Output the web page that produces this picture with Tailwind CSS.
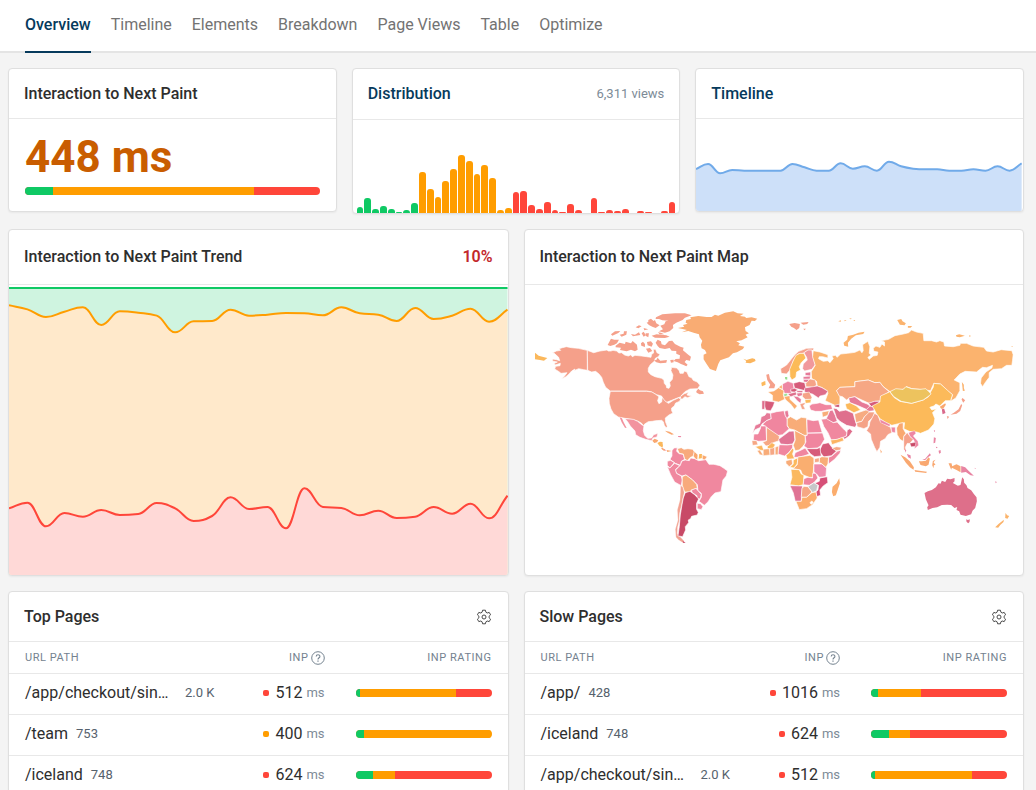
<!DOCTYPE html>
<html lang="en">
<head>
  <meta charset="UTF-8" />
  <meta name="viewport" content="width=device-width, initial-scale=1.0"/>
  <title>Interaction to Next Paint - Overview</title>

  <!-- Tailwind CSS v4 CDN -->
  <script src="https://cdn.jsdelivr.net/npm/@tailwindcss/browser@4"></script>
</head>
<body class="bg-[#f4f4f4] font-[Roboto,sans-serif] text-[#2e2e2e] min-h-screen">

  <!-- Tabs -->
  <header class="bg-white border-b-2 border-[#e4e4e4] pl-[25px]">
    <nav class="flex gap-5 text-base text-[#737373]">
      <a href="#overview" class="-mb-0.5 border-b-2 border-[#063a5c] pt-[13px] pb-3.5 font-medium text-[#063a5c]">Overview</a>
      <a href="#timeline" class="pt-[13px]">Timeline</a>
      <a href="#elements" class="pt-[13px]">Elements</a>
      <a href="#breakdown" class="pt-[13px]">Breakdown</a>
      <a href="#page-views" class="pt-[13px]">Page Views</a>
      <a href="#table" class="pt-[13px]">Table</a>
      <a href="#optimize" class="pt-[13px]">Optimize</a>
    </nav>
  </header>

  <main class="flex flex-col gap-[15px] pt-[15px] pl-2 pr-3">

    <!-- Summary cards -->
    <div class="grid grid-cols-3 gap-[15px] items-start">
      <section class="bg-white border border-[#dfdfdf] rounded shadow-xs overflow-hidden">
        <h2 class="h-[50px] flex items-center px-[15px] border-b border-[#e8e8e8] font-medium">Interaction to Next Paint</h2>
        <div class="p-4">
          <p class="text-[44px] leading-[44px] font-bold text-[#c95d00]">448 ms</p>
          <div class="mt-2 flex h-2 rounded-full overflow-hidden bg-[#ff463a]">
            <div class="bg-[#0fc964]" style="width:9.5%"></div>
            <div class="bg-[#ff9d00]" style="width:68.2%"></div>
          </div>
        </div>
      </section>

      <section class="bg-white border border-[#dfdfdf] rounded shadow-xs overflow-hidden">
        <div class="h-[51px] flex items-center justify-between px-[15px] border-b border-[#e8e8e8]">
          <h2 class="font-medium"><a href="#distribution" class="text-[#063a5c]">Distribution</a></h2>
          <span class="text-[13px] text-[#7d8b97]">6,311 views</span>
        </div>
        <div id="distribution" class="h-[93px] flex items-end pl-1 pr-[3px]"></div>
      </section>

      <section class="bg-white border border-[#dfdfdf] rounded shadow-xs overflow-hidden">
        <h2 class="h-[50px] flex items-center px-[15px] border-b border-[#e8e8e8] font-medium"><a href="#timeline" class="text-[#063a5c]">Timeline</a></h2>
        <svg id="timeline" class="block w-full h-[92px] pr-px" viewBox="0 0 978 276" preserveAspectRatio="none"></svg>
      </section>
    </div>

    <!-- Trend and map -->
    <div class="grid grid-cols-2 gap-[15px]">
      <section class="bg-white border border-[#dfdfdf] rounded shadow-xs overflow-hidden">
        <div class="h-[55px] flex items-center justify-between px-[15px] border-b border-[#e8e8e8]">
          <h2 class="font-medium">Interaction to Next Paint Trend</h2>
          <span class="font-semibold text-[#c3272b]">10%</span>
        </div>
        <svg id="trend" class="block w-full h-[290px]" viewBox="0 0 1497 870" preserveAspectRatio="none"></svg>
      </section>

      <section class="bg-white border border-[#dfdfdf] rounded shadow-xs overflow-hidden">
        <h2 class="h-[55px] flex items-center px-[15px] border-b border-[#e8e8e8] font-medium">Interaction to Next Paint Map</h2>
        <svg class="block w-full h-[290px]" viewBox="0 -45 1496 870" role="img" aria-label="World map" stroke="#fff" stroke-width="2" stroke-linejoin="round">
          <!-- North America -->
          <g fill="#f5a08a">
            <path d="M82 159 94 153 107 151 102 146 112 143 124 140 140 143 160 145 187 151 187 211 176 209 161 206 147 212 150 207 140 213 132 222 123 230 110 237 118 229 126 218 108 220 102 215 89 207 92 199 105 197 106 190 90 195 88 190 97 186 82 183 83 177 95 179 104 182 101 172 88 160Z"/>
            <path d="M187 151 206 158 225 153 246 150 250 153 258 153 264 151 275 153 282 159 290 158 299 165 310 168 318 164 322 170 330 166 350 168 365 170 378 172 380 163 386 159 385 148 392 148 396 158 405 163 400 170 391 175 388 184 376 194 370 205 370 216 378 224 390 230 410 235 417 240 418 250 424 257 425 263 432 265 436 258 434 247 442 238 444 225 438 212 440 202 455 204 463 212 465 220 475 220 478 213 486 216 492 230 500 233 505 241 517 246 525 256 518 266 495 267 480 275 468 288 478 281 491 277 486 285 500 288 488 293 480 290 472 297 465 296 468 290 455 295 440 301 425 307 415 299 410 288 395 284 378 275 365 273 256 273 242 262 235 247 230 232 222 222 212 214 200 216 188 211Z"/>
            <path d="M256 274 365 274 381 276 392 283 402 290 398 302 402 311 410 306 412 292 418 300 424 306 431 310 445 301 462 293 467 299 462 305 452 309 448 318 440 324 440 332 444 339 432 345 421 354 422 366 427 379 424 384 418 376 415 365 410 361 392 362 382 364 370 365 358 373 356 378 350 370 340 364 325 359 300 355 280 351 266 341 258 327 253 310 252 295Z"/>
          </g>
          <g fill="#f5a08a" stroke="none">
            <path d="M514 274 520 266 525 271 534 274 537 281 524 283 515 278Z"/>
            <path d="M248 135 258 116 268 119 282 119 276 130 268 134 256 138ZM272 137 284 128 300 132 302 125 318 130 323 123 336 134 338 149 330 154 318 149 305 154 285 150 288 143 272 142Z"/>
            <path d="M393 52 412 43 450 40 480 40 500 46 480 53 473 60 454 68 444 75 445 84 434 94 420 98 402 94 414 88 406 77 418 73 422 64 430 62 412 61 402 57 392 57Z"/>
            <path d="M365 68 370 66 370 60 378 56 386 63 390 60 394 70 404 76 392 84 382 80 372 75ZM380 107 395 103 424 106 434 110 420 114 390 113ZM399 97 408 98 418 103 404 103Z"/>
            <path d="M392 128 398 119 408 124 410 133 420 136 432 123 442 122 450 132 466 140 476 143 474 151 490 164 498 170 495 182 484 180 479 186 488 194 484 199 476 195 468 192 458 187 446 183 452 177 464 176 465 166 454 161 454 153 440 152 434 144 420 147 404 144 398 138Z"/>
            <path d="M348 130 354 125 360 132 360 141 349 137ZM366 126 378 124 384 131 380 140 368 136ZM387 181 394 180 398 173 406 182 426 180 424 188 406 190 394 187ZM363 146 375 144 382 153 370 158ZM436 180 446 179 446 187 438 188Z"/>
            <path d="M258 103 270 94 286 93 280 99 262 107ZM284 104 296 101 297 94 306 94 304 104 290 110ZM332 82 342 76 350 79 340 85ZM350 100 356 95 363 106 356 110ZM318 102 330 104 342 97 346 105 324 109ZM362 100 372 100 370 112 363 108ZM356 84 370 88 358 91Z"/>
          </g>
          <path fill="#f2939f" d="M300 356 325 358 338 364 350 374 357 378 355 392 359 406 368 415 380 414 386 404 399 400 396 411 384 414 380 422 362 418 345 412 332 404 330 393 316 378 308 365Z"/>
          <path fill="#f2939f" stroke="none" d="M284 352 291 355 296 367 305 384 300 383 290 367Z"/>
          <g stroke="none">
            <path fill="#f9a870" d="M382 422 389 416 400 421 396 427 388 429ZM420 392 434 395 447 403 440 404 428 398Z"/>
            <path fill="#fbb85c" d="M397 429 405 425 413 426 413 442 404 438ZM30 158 41 167 52 170 67 174 57 182 45 180 30 178Z"/>
            <path fill="#ee86a3" d="M459 408 469 408 467 412 460 411ZM410 446 418 447 425 452 416 451Z"/>
          </g>
          <path fill="#f9ac73" stroke="none" d="M459 84 478 80 474 75 488 71 482 68 484 60 498 57 496 52 520 48 545 51 560 51 570 44 580 47 600 38 625 34 638 40 656 41 645 48 660 50 664 54 680 52 697 56 690 63 680 62 674 75 660 82 662 93 672 100 662 104 668 112 650 121 634 124 645 130 640 136 658 140 654 147 636 157 624 160 612 172 586 181 580 192 573 213 555 207 545 192 536 178 536 164 545 160 540 150 530 145 528 134 532 122 524 112 522 103 506 98 490 93 470 97 465 99 486 90Z"/>
          <path fill="#fbb55d" stroke="none" d="M655 176 665 180 672 178 682 175 690 177 692 183 676 190 662 188 664 183Z"/>

          <!-- South America -->
          <g transform="translate(345 390)">
            <g stroke="none">
              <path fill="#fbb85c" d="M64 38 69 46 66 52 60 46ZM178 72 186 72 188 84 176 86Z"/>
              <path fill="#f9a870" d="M66 52 76 61 72 62 64 56ZM80 60 95 63 82 66Z"/>
            </g>
            <path fill="#f0889f" d="M96 62 102 54 112 53 110 64 118 71 130 73 134 88 124 94 122 106 106 100 90 88 96 78Z"/>
            <path fill="#f8aa7c" d="M112 56 124 53 132 58 144 56 158 58 164 66 160 78 150 83 142 93 134 86 130 72 118 70Z"/>
            <path fill="#f9a870" d="M163 64 174 74 173 90 166 87 160 78ZM187 74 202 80 194 91 187 88Z"/>
            <path fill="#f0889f" d="M82 94 92 91 103 98 98 104 90 114 82 106Z"/>
            <path fill="#f0889f" d="M82 110 90 114 104 100 120 107 107 118 110 130 124 138 127 150 124 167 104 156 92 134Z"/>
            <path fill="#f0889f" d="M107 120 121 106 126 93 136 90 148 92 152 84 164 86 176 92 198 89 207 103 222 103 240 107 252 115 263 123 259 138 249 150 246 168 243 185 225 189 214 200 204 216 193 226 177 214 184 202 184 190 174 182 172 164 158 150 138 135 126 138 110 130Z"/>
            <path fill="#f8aa7c" d="M127 140 138 135 158 150 170 163 172 175 154 180 150 187 134 186 127 166Z"/>
            <path fill="#f0889f" d="M154 181 168 175 174 182 184 193 181 207 168 205 172 198 157 188Z"/>
            <path fill="#f3a291" stroke-width="1" d="M122 166 129 172 133 188 129 205 125 225 119 250 118 272 113 292 112 310 116 318 122 322 132 332 130 339 116 330 108 322 106 298 114 270 112 240 120 210Z"/>
            <path fill="#c84a67" d="M136 188 150 184 164 194 176 207 170 220 170 238 175 247 172 255 155 259 152 266 145 270 146 278 136 290 137 300 128 320 114 318 118 290 121 255 126 225 130 204Z"/>
            <path fill="#f0889f" d="M172 220 182 221 189 230 184 239 172 236Z"/>
            <path fill="#c84a67" stroke="none" d="M128 332 137 338 130 339Z"/>
          </g>

          <!-- Africa and Middle East -->
          <g transform="translate(645 270)">
            <path fill="#e67a98" d="M64 80 75 76 80 68 92 70 94 86 80 92 66 102 62 112 46 119 38 130 46 106 60 100Z"/>
            <path fill="#f0869f" d="M92 70 110 65 132 62 136 76 142 86 142 108 148 116 128 134 112 137 68 103 80 92 94 86Z"/>
            <path fill="#e67a98" d="M134 64 144 61 147 77 141 86 136 76Z"/>
            <path fill="#f8ac78" d="M142 86 152 80 170 90 184 82 200 84 202 136 192 136 164 120 148 116 142 106Z"/>
            <path fill="#f0869f" d="M201 88 220 92 236 90 240 104 247 128 202 129Z"/>
            <path fill="#f0869f" d="M42 132 54 132 62 114 62 108 78 108 80 152 56 154 40 150Z"/>
            <path fill="#f6a784" d="M80 112 118 138 118 152 100 158 90 166 78 168 68 156 80 152Z"/>
            <path fill="#e07394" d="M118 154 116 148 148 124 162 123 165 150 158 162 142 164 122 162Z"/>
            <path fill="#f8ac78" d="M164 121 196 138 196 160 188 170 178 180 166 182 160 166 166 150Z"/>
            <path fill="#f0869f" d="M202 130 248 129 254 148 242 168 232 174 204 176 192 168 198 156 196 138 202 136Z"/>
            <path fill="#d65b7a" d="M248 162 266 158 276 172 290 183 275 197 252 201 238 184Z"/>
            <path fill="#f6a784" d="M276 174 290 170 304 172 302 180 288 182Z"/>
            <path fill="#f0869f" d="M276 198 292 184 303 180 300 190 284 208 266 222 266 202Z"/>
            <path fill="#d65b7a" d="M200 176 232 176 240 172 242 186 244 198 224 200 212 192Z"/>
            <path fill="#f0869f" d="M162 202 166 188 184 180 196 174 208 192 192 198 172 202Z"/>
            <path fill="#f0869f" d="M114 192 118 164 142 165 158 163 158 174 146 188 134 198Z"/>
            <path fill="#fbb55d" d="M138 196 146 190 158 174 162 180 158 192 164 206 142 208Z"/>
            <path fill="#f8ac78" d="M138 212 156 208 158 222 148 230 138 220Z"/>
            <path fill="#fcb95c" d="M150 232 160 222 160 210 174 203 172 222 162 234Z"/>
            <path fill="#faae70" d="M174 201 196 198 210 196 222 204 222 220 220 248 222 262 208 262 188 254 182 240 160 236 172 224Z"/>
            <path fill="#fbb960" d="M153 238 178 239 184 252 192 256 190 284 176 288 150 284 156 262Z"/>
            <path fill="#f0869f" d="M190 284 192 266 204 262 218 264 218 250 228 250 234 264 222 278 208 286Z"/>
            <path fill="#ef8bab" d="M222 222 246 222 260 234 258 260 238 262 230 252 222 246Z"/>
            <path fill="#f8ac78" d="M238 204 246 200 266 202 264 222 258 232 244 220 238 218Z"/>
            <path fill="#f6a784" d="M224 206 238 203 238 216 224 218Z"/>
            <path fill="#d65078" d="M240 264 262 260 264 278 250 288 240 300 242 316 230 320 228 306 234 300 236 286 224 280 238 274Z"/>
            <path fill="#e07394" d="M150 287 188 288 186 304 184 334 166 334 160 308Z"/>
            <path fill="#c6c8c9" d="M204 290 222 278 234 286 230 302 218 308Z"/>
            <path fill="#f6a784" d="M186 296 192 289 204 290 216 306 200 322 184 322Z"/>
            <path fill="#fbad6d" d="M168 334 184 334 186 322 200 322 216 308 228 306 232 324 218 344 200 356 178 359Z"/>
            <path fill="#fff" d="M210 338 216 333 220 338 214 343Z"/>
            <path fill="#fbad6d" stroke="none" d="M278 290 290 280 298 265 300 280 288 316 280 319 276 306Z"/>
            <g stroke-width="1.5">
              <path fill="#f6a784" d="M36 152 50 152 54 164 38 166ZM90 174 104 172 104 194 90 196Z"/>
              <path fill="#fbb55d" d="M46 170 66 166 72 182 60 180ZM82 170 96 158 106 164 100 174 84 176Z"/>
              <path fill="#f8ac78" d="M70 178 88 176 90 195 70 197ZM52 182 60 180 70 196 60 194ZM106 172 116 168 114 194 106 194Z"/>
            </g>
            <!-- Middle East -->
            <path fill="#f0869f" d="M208 48 216 42 232 40 240 38 258 44 274 44 278 58 262 60 244 64 226 64 212 60Z"/>
            <path fill="#f8ac78" d="M246 66 268 62 264 76 248 82Z"/>
            <path fill="#e67a98" d="M264 76 270 62 278 60 286 76 292 94 280 98 258 88Z"/>
            <path fill="#df6f8d" d="M280 54 290 56 298 64 318 60 340 70 344 86 350 104 346 112 320 106 300 94 290 84Z"/>
            <path fill="#f0889f" d="M244 88 260 86 280 98 292 96 306 112 314 120 322 128 318 140 292 148 274 150 264 128 252 110Z"/>
            <path fill="#fcb462" d="M272 150 292 148 308 142 312 152 276 164Z"/>
            <path fill="#de6d8b" d="M322 120 330 116 338 124 328 138 314 148 310 142 320 138Z"/>
            <path fill="#c94b6c" stroke-width="1" d="M282 44 298 40 298 52 286 50Z"/>
            <path fill="#f7ab82" d="M344 72 360 66 384 58 390 68 374 80 366 94 348 98Z"/>
            <path fill="#f5a387" d="M350 98 366 94 374 80 388 66 404 66 400 82 386 94 384 110 372 116 352 110Z"/>
          </g>

          <!-- Europe, Russia, Central Asia -->
          <g transform="translate(645)">
            <g stroke="none">
              <path fill="#f5a08a" d="M148 72 164 69 180 72 178 84 170 90 162 84 154 80ZM182 68 206 66 202 72 190 74ZM190 86 198 86 194 91Z"/>
              <path fill="#fbb36e" d="M295 64 303 61 303 65ZM314 60 320 61 314 64ZM328 54 336 56 332 58ZM340 60 346 60 344 63Z"/>
              <path fill="#fbb36e" d="M313 137 311 128 322 119 324 108 340 104 356 98 374 95 370 102 348 106 334 116 324 128 325 140Z"/>
              <path fill="#fcb95c" d="M64 248 76 243 77 254 66 259Z"/>
              <path fill="#f5a08a" d="M79 224 87 222 90 236 99 247 106 254 103 265 86 265 91 254 82 240Z"/>
              <path fill="#94de8e" d="M135 231 142 231 142 239 136 238Z"/>
            </g>
            <path fill="#f5a08a" d="M122 206 140 195 152 180 164 165 176 154 200 145 222 144 220 151 204 151 190 160 174 162 160 182 152 208 140 222 124 220Z"/>
            <path fill="#fcbb58" d="M149 208 160 182 168 166 180 160 192 160 198 174 184 188 178 200 182 210 170 216 168 232 156 240 150 230Z"/>
            <path fill="#f1989c" d="M192 158 204 150 216 150 218 166 226 194 216 208 194 213 188 206 190 192 202 180 200 172Z"/>
            <path fill="#fbb36e" d="M220 152 240 156 264 164 264 174 248 170 238 170 236 176 250 184 264 182 270 188 280 176 276 168 286 166 292 172 302 162 322 160 345 157 360 150 366 158 370 152 368 134 384 124 390 140 388 160 394 165 384 172 388 178 400 168 412 166 414 156 402 154 400 145 408 138 420 142 426 132 434 138 434 126 424 122 446 118 465 107 490 102 506 98 515 90 530 96 550 100 552 122 575 122 590 126 600 122 612 126 614 138 640 140 660 136 662 130 680 130 700 138 732 142 740 153 760 156 784 149 816 152 820 164 818 182 816 196 800 196 785 206 760 208 748 218 748 232 738 245 728 260 722 250 724 234 738 216 756 204 758 196 740 203 728 202 710 216 676 214 660 222 643 240 660 248 660 272 648 294 632 304 638 284 622 272 602 252 582 250 572 272 540 268 516 266 500 260 490 268 450 275 430 260 420 247 405 248 385 240 345 245 345 260 300 262 290 272 300 288 300 312 285 316 256 302 264 280 262 272 245 262 232 258 230 244 215 235 214 215 226 196 218 170Z"/>
            <path fill="#f6a784" d="M290 272 300 262 345 260 345 245 385 240 405 248 420 247 430 260 448 275 432 286 428 302 406 304 388 310 366 300 345 290 328 294 320 300 308 290 298 288Z"/>
            <path fill="#e67a98" d="M326 294 345 290 366 306 382 312 396 322 384 330 352 316 330 308Z"/>
            <path fill="#fcb95c" d="M316 312 330 308 350 318 362 330 342 338 320 326Z"/>
            <path fill="#d65b7a" d="M386 310 404 304 420 304 412 314 396 322Z"/>
            <path fill="#e67a98" d="M378 330 390 318 404 322 402 332 388 334Z"/>
            <g stroke-width="1.5">
              <path fill="#ee86a3" d="M128 252 144 244 160 250 162 266 152 272 156 280 134 280 128 268Z"/>
              <path fill="#d65b7a" d="M161 250 178 245 194 248 198 264 192 271 164 264Z"/>
              <path fill="#e67a98" d="M196 218 212 216 212 228 196 226ZM190 230 212 228 210 237 190 237ZM190 238 208 238 204 247 192 246Z"/>
              <path fill="#f5a387" d="M198 250 210 237 226 240 230 256 220 261 198 260Z"/>
              <path fill="#de6d8b" d="M194 264 220 260 232 258 246 263 264 274 256 284 240 288 236 294 218 282 194 276Z"/>
              <path fill="#fbad6d" d="M84 276 102 273 116 263 132 272 130 284 134 298 116 306 98 302 98 286Z"/>
              <path fill="#94de8e" d="M131 283 140 280 144 286 134 290Z"/>
              <path fill="#fbad6d" d="M116 262 126 254 128 268Z"/>
              <path fill="#d65b7a" d="M152 268 164 265 174 270 164 276 154 275Z"/>
              <path fill="#de6d8b" d="M144 282 168 276 170 284 152 290ZM170 272 190 272 186 278 172 277Z"/>
              <path fill="#e67a98" d="M170 280 186 278 188 286 174 290ZM160 288 174 290 184 298 182 310 172 302Z"/>
              <path fill="#f5a387" d="M188 280 208 276 216 292 214 298 196 298 188 290Z"/>
              <path fill="#fcb95c" d="M195 299 214 298 212 308 197 310Z"/>
              <path fill="#fbad6d" d="M132 290 150 287 150 298 172 318 164 328 152 312 138 300Z"/>
              <path fill="#f5a387" d="M180 312 194 308 196 312 190 316 196 328 186 328Z"/>
              <path fill="#d65b7a" d="M74 302 104 306 100 318 92 332 78 330 74 318Z"/>
              <path fill="#de6d8b" d="M66 302 75 302 74 328 66 328Z"/>
            </g>
          </g>

          <!-- East Asia -->
          <g transform="translate(1005)">
            <path fill="#fcba5a" d="M37 318 60 306 62 288 90 275 102 292 120 304 155 310 190 300 206 290 212 276 220 262 222 250 242 252 262 270 278 284 272 302 256 302 240 318 228 312 222 318 210 322 216 330 230 326 218 338 225 356 222 372 206 390 182 400 170 396 160 396 148 394 132 386 134 368 112 372 96 376 76 366 60 356 50 342 44 330Z"/>
            <path fill="#edc35e" d="M90 275 108 266 130 268 138 260 155 266 180 268 198 266 206 274 214 282 204 290 190 300 155 310 124 304 102 290Z"/>
            <g stroke="none">
              <path fill="#fbb36e" d="M112 60 124 57 128 64 138 70 134 76 120 74ZM144 78 157 78 152 83 144 83ZM288 106 298 103 315 107 300 112 290 110ZM328 106 334 108 328 110ZM455 138 460 140 456 141ZM306 246 312 254 312 264 315 272 309 273Z"/>
              <path fill="#f9a870" d="M240 320 256 310 258 314 250 326 244 326Z"/>
              <path fill="#d96a8c" d="M246 328 253 326 257 339 248 343Z"/>
              <path fill="#f5a08a" d="M305 298 308 294 316 301 310 308ZM304 312 307 316 301 333 290 341 272 344 282 338 296 328ZM261 348 268 350 263 357Z"/>
            </g>
          </g>

          <!-- South Asia and Oceania -->
          <g transform="translate(1005 300)">
            <path fill="#f5a18b" d="M20 92 28 78 30 66 44 40 54 46 62 66 92 82 96 98 84 104 76 116 62 124 60 142 51 155 44 142 34 118 32 102Z"/>
            <path fill="#ee86a3" stroke-width="1" d="M60 58 92 74 88 79 62 68ZM94 82 106 82 106 98 96 96Z"/>
            <path fill="#f9a870" d="M110 84 118 70 130 68 130 86 138 100 132 108 130 124 120 118 112 104Z"/>
            <path fill="#f5a18b" stroke-width="1" d="M132 110 142 98 152 112 160 118 150 130 142 130 136 142 138 154 132 148Z"/>
            <path fill="#ee86a3" stroke-width="1" d="M146 98 164 92 168 100 160 108 174 124 176 136 164 146 166 132 162 120 150 108Z"/>
            <path fill="#c84a67" stroke-width="1" d="M150 130 168 127 166 139 154 140Z"/>
            <g stroke="none">
              <path fill="#f9a870" d="M61 148 66 155 63 160ZM122 164 136 172 150 184 162 202 161 209 150 202 138 188ZM164 210 184 213 201 215 199 219 180 217 166 215ZM177 184 186 184 198 182 206 172 210 176 206 194 198 199 182 195ZM217 196 219 183 227 179 221 187 227 194 222 196 221 205Z"/>
              <path fill="#f9a870" d="M266 190 275 190 277 199 290 193 302 199 302 217 290 210 276 203 274 209Z"/>
              <path fill="#e884a2" d="M304 198 316 202 326 212 342 227 332 226 318 216 304 218ZM345 203 348 206 345 207ZM407 243 411 247 407 250ZM141 162 152 166 153 176 145 172ZM187 180 196 176 210 160 213 166 204 172 196 180ZM222 112 228 114 226 128 221 130ZM228 140 234 142 229 145ZM236 152 242 150 243 158 238 161ZM222 90 226 92 223 97ZM134 148 139 150 138 158Z"/>
              <path fill="#de6f8a" d="M194 279 204 274 216 270 228 262 236 250 242 251 246 242 256 246 262 236 272 238 284 234 284 244 279 249 294 257 302 255 307 232 312 238 313 248 320 256 323 264 334 271 342 282 350 292 351 304 346 324 338 332 334 343 318 348 302 344 298 334 290 330 292 321 284 324 274 315 262 314 246 315 232 322 218 324 204 330 202 322 206 316 198 298Z"/>
              <path fill="#de6f8a" d="M319 358 324 360 330 358 329 366 325 370 320 365Z"/>
              <path fill="#fbb36a" d="M437 339 442 346 448 348 443 356 436 354ZM432 359 431 366 422 374 415 383 406 382 416 372Z"/>
            </g>
          </g>
        </svg>
      </section>
    </div>

    <!-- Page tables -->
    <div class="grid grid-cols-2 gap-[15px]">
      <section class="bg-white border border-[#dfdfdf] rounded shadow-xs overflow-hidden">
        <div class="h-[50px] flex items-center justify-between pl-[15px] pr-4 border-b border-[#e8e8e8]">
          <h2 class="font-medium">Top Pages</h2>
          <button type="button" aria-label="Top Pages settings" class="text-[#4a4a4a]"><svg class="w-4 h-4" viewBox="0 0 16 16" fill="none" stroke="currentColor" stroke-linejoin="round"><path d="M6.600 1.200h2.800l.5 2 1.300.8 2-.6 1.400 2.400-1.500 1.400v1.600l1.500 1.400-1.400 2.400-2-.6-1.300.8-.5 2H6.600l-.5-2-1.300-.8-2 .6-1.400-2.400 1.500-1.400V7.200L1.400 5.800l1.400-2.400 2 .6 1.300-.8z"/><circle cx="8" cy="8" r="2"/></svg></button>
        </div>
        <table id="top-pages" class="w-full table-fixed"></table>
      </section>

      <section class="bg-white border border-[#dfdfdf] rounded shadow-xs overflow-hidden">
        <div class="h-[50px] flex items-center justify-between pl-[15px] pr-4 border-b border-[#e8e8e8]">
          <h2 class="font-medium">Slow Pages</h2>
          <button type="button" aria-label="Slow Pages settings" class="text-[#4a4a4a]"><svg class="w-4 h-4" viewBox="0 0 16 16" fill="none" stroke="currentColor" stroke-linejoin="round"><path d="M6.600 1.200h2.800l.5 2 1.300.8 2-.6 1.400 2.400-1.500 1.400v1.600l1.500 1.400-1.400 2.400-2-.6-1.300.8-.5 2H6.600l-.5-2-1.300-.8-2 .6-1.400-2.400 1.500-1.400V7.200L1.400 5.800l1.400-2.400 2 .6 1.300-.8z"/><circle cx="8" cy="8" r="2"/></svg></button>
        </div>
        <table id="slow-pages" class="w-full table-fixed"></table>
      </section>
    </div>
  </main>

<script>
  // Distribution histogram, bar heights in px
  const buckets = [
    ['bg-[#0fc964]', [6, 15, 4, 7, 4, 1, 3, 10]],
    ['bg-[#ff9d00]', [41, 24, 16, 32, 44, 58, 52, 39, 48, 35, 3, 5]],
    ['bg-[#ff463a]', [21, 22, 8, 4, 11, 3, 1, 9, 3, 0, 15, 1, 3, 2, 4, 0, 2, 1, 0, 2, 11]]
  ];
  document.getElementById('distribution').innerHTML = buckets.map(([color, values]) =>
    values.map(v => `<div class="flex-1 pr-px"><div class="rounded-t-[3px] ${color}" style="height:${v}px"></div></div>`).join('')
  ).join('');

  // Smooth monotone curve through evenly spaced points
  function curve(values, width) {
    const dx = width / (values.length - 1);
    const handle = dx * 0.42;
    const slope = values.slice(1).map((v, i) => (v - values[i]) / dx);
    const tangent = values.map((v, i) => {
      if (i === 0) return slope[0];
      if (i === values.length - 1) return slope[i - 1];
      const a = slope[i - 1], b = slope[i];
      if (a * b <= 0) return 0;
      return Math.sign(a) * Math.min(Math.abs(a), Math.abs(b), Math.abs(a + b) / 4) * 2;
    });
    let d = `M0 ${values[0]}`;
    for (let i = 1; i < values.length; i++) {
      const x0 = (i - 1) * dx, x1 = i * dx;
      d += `C${x0 + handle} ${values[i - 1] + tangent[i - 1] * handle} ${x1 - handle} ${values[i] - tangent[i] * handle} ${x1} ${values[i]}`;
    }
    return d;
  }

  function area(values, width, height, fill, stroke) {
    const d = curve(values, width);
    return `<path d="${d}V${height}H0Z" fill="${fill}"/><path d="${d}" fill="none" stroke="${stroke}" stroke-width="2" vector-effect="non-scaling-stroke"/>`;
  }

  const timeline = [150, 135, 163, 153, 155, 155, 155, 155, 135, 145, 155, 155, 133, 149, 142, 155, 128, 142, 149, 151, 151, 155, 155, 151, 155, 142, 155, 133];
  document.getElementById('timeline').innerHTML = area(timeline, 978, 276, '#cde0f9', '#70aae9');

  const needsWork = [61, 73, 96, 80, 67, 120, 79, 83, 92, 142, 109, 108, 74, 92, 89, 84, 85, 91, 67, 85, 89, 108, 69, 102, 92, 71, 110, 74];
  const poor = [670, 653, 724, 684, 695, 675, 690, 687, 654, 670, 708, 693, 637, 672, 666, 730, 610, 666, 669, 691, 677, 699, 695, 666, 686, 656, 700, 632];
  document.getElementById('trend').innerHTML =
    area([9, 9], 1497, 870, '#cff4e0', '#0fc964') +
    area(needsWork, 1497, 870, '#ffe9cb', '#ff9d00') +
    area(poor, 1497, 870, '#ffd9d7', '#ff463a');

  // Page tables: path, views, INP, rating color, good %, needs improvement %
  const red = 'bg-[#ff463a]', orange = 'bg-[#ff9d00]';
  const checkout = ['/app/checkout/sin…', '2.0 K', 512, red, 3, 71];
  const iceland = ['/iceland', '748', 624, red, 13, 16];
  const tables = {
    'top-pages': [checkout, ['/team', '753', 400, orange, 6, 94], iceland],
    'slow-pages': [['/app/', '428', 1016, red, 5, 32], iceland, checkout]
  };

  for (const id in tables) {
    document.getElementById(id).innerHTML = `
      <thead>
        <tr class="h-[31px] border-b border-[#e8e8e8] text-[11px] leading-4 tracking-wider text-[#74828f]">
          <th class="p-0 pt-px pl-4 text-left font-normal">URL PATH</th>
          <th class="w-[100px] p-0 pt-px font-normal">
            <div class="flex items-center justify-end gap-0.5">INP
              <svg class="w-3.5 h-3.5" viewBox="0 0 14 14" fill="none" stroke="currentColor"><circle cx="7" cy="7" r="6.300"/><path d="M5.200 5.600c0-2.500 3.700-2.400 3.700-.2C8.900 6.800 7 6.800 7 8.500" stroke-width="1.100"/><path d="M7 9.600v1.200" stroke-width="1.200"/></svg>
            </div>
          </th>
          <th class="w-[183px] p-0 pt-px pr-4 text-right font-normal">INP RATING</th>
        </tr>
      </thead>
      <tbody>` + tables[id].map(([path, views, inp, color, good, mid]) => `
        <tr class="h-[41px] border-b border-[#e8e8e8]">
          <td class="p-0 pb-px pl-4">
            <div class="flex items-center gap-2">
              <a href="#" class="shrink-0 ${path.endsWith('…') ? 'w-[152px]' : ''}">${path}</a>
              <span class="text-[13px] text-[#56626d]">${views}</span>
            </div>
          </td>
          <td class="p-0 pb-px">
            <div class="flex items-center justify-end">
              <span class="mr-1.5 size-1.5 rounded-[2px] ${color}"></span>
              <span>${inp}</span>
              <span class="ml-1 text-[13px] text-[#7d8b97]">ms</span>
            </div>
          </td>
          <td class="p-0 pb-px pl-[31px] pr-4">
            <div class="flex h-2 rounded-full overflow-hidden ${good + mid < 100 ? 'bg-[#ff463a]' : 'bg-[#ff9d00]'}">
              <div class="bg-[#0fc964]" style="width:${good}%"></div>
              <div class="bg-[#ff9d00]" style="width:${mid}%"></div>
            </div>
          </td>
        </tr>`).join('') + `
      </tbody>`;
  }
</script>

</body>
</html>
